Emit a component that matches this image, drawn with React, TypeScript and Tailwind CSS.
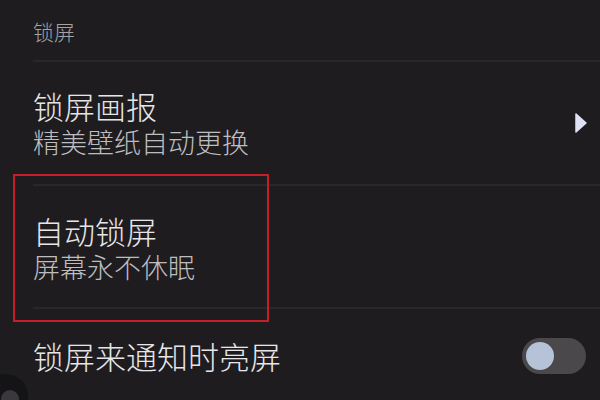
const font = { fontFamily: '"Noto Sans CJK SC", "Noto Sans", sans-serif' }

function Divider() {
  return <div className="ml-[33px] h-[2px] bg-[#29272a]" />
}

export default function App() {
  return (
    <div className="relative w-[600px] h-[400px] overflow-hidden bg-[#1e1c1f] font-light" style={font}>
      <div className="h-[60px] pl-[33px] pt-[16px] text-[21px] leading-[30px] text-[#a3a3a6]">锁屏</div>
      <Divider />

      <div className="h-[122px] flex items-start justify-between pl-[33px] pr-[13px] pt-[26px]">
        <div>
          <div className="text-[31px] leading-[36px] text-[#e6e6e8]">锁屏画报</div>
          <div className="text-[27px] leading-[36px] text-[#bdbdc0]">精美壁纸自动更换</div>
        </div>
        <svg width="12" height="20" viewBox="0 0 12 20" className="mt-[25px]">
          <path d="M1 1 L11 10 L1 19 Z" fill="#dfe2f2" stroke="#dfe2f2" strokeWidth="1.5" strokeLinejoin="round" />
        </svg>
      </div>
      <Divider />

      <div className="relative h-[121px] pl-[33px] pt-[27px]">
        <div className="absolute left-[13px] top-[-12px] w-[256px] h-[148px] border-2 border-[#c41e28]" />
        <div className="text-[31px] leading-[36px] text-[#e6e6e8]">自动锁屏</div>
        <div className="text-[27px] leading-[36px] text-[#bdbdc0]">屏幕永不休眠</div>
      </div>
      <Divider />

      <div className="flex items-center justify-between pl-[33px] pr-[14px] pt-[29px]">
        <div className="text-[31px] leading-[36px] text-[#e6e6e8]">锁屏来通知时亮屏</div>
        <div className="w-[64px] h-[36px] rounded-full bg-[#4a484b] flex items-center pl-[4px]">
          <div className="w-[28px] h-[28px] rounded-full bg-[#b6c2d8]" />
        </div>
      </div>

      <div className="absolute left-[-16px] top-[374px] w-[44px] h-[44px] rounded-full bg-[#141315] flex items-center justify-center">
        <div className="w-[18px] h-[18px] rounded-full bg-[#3a383c] ml-[8px] mt-[6px]" />
      </div>
    </div>
  )
}
